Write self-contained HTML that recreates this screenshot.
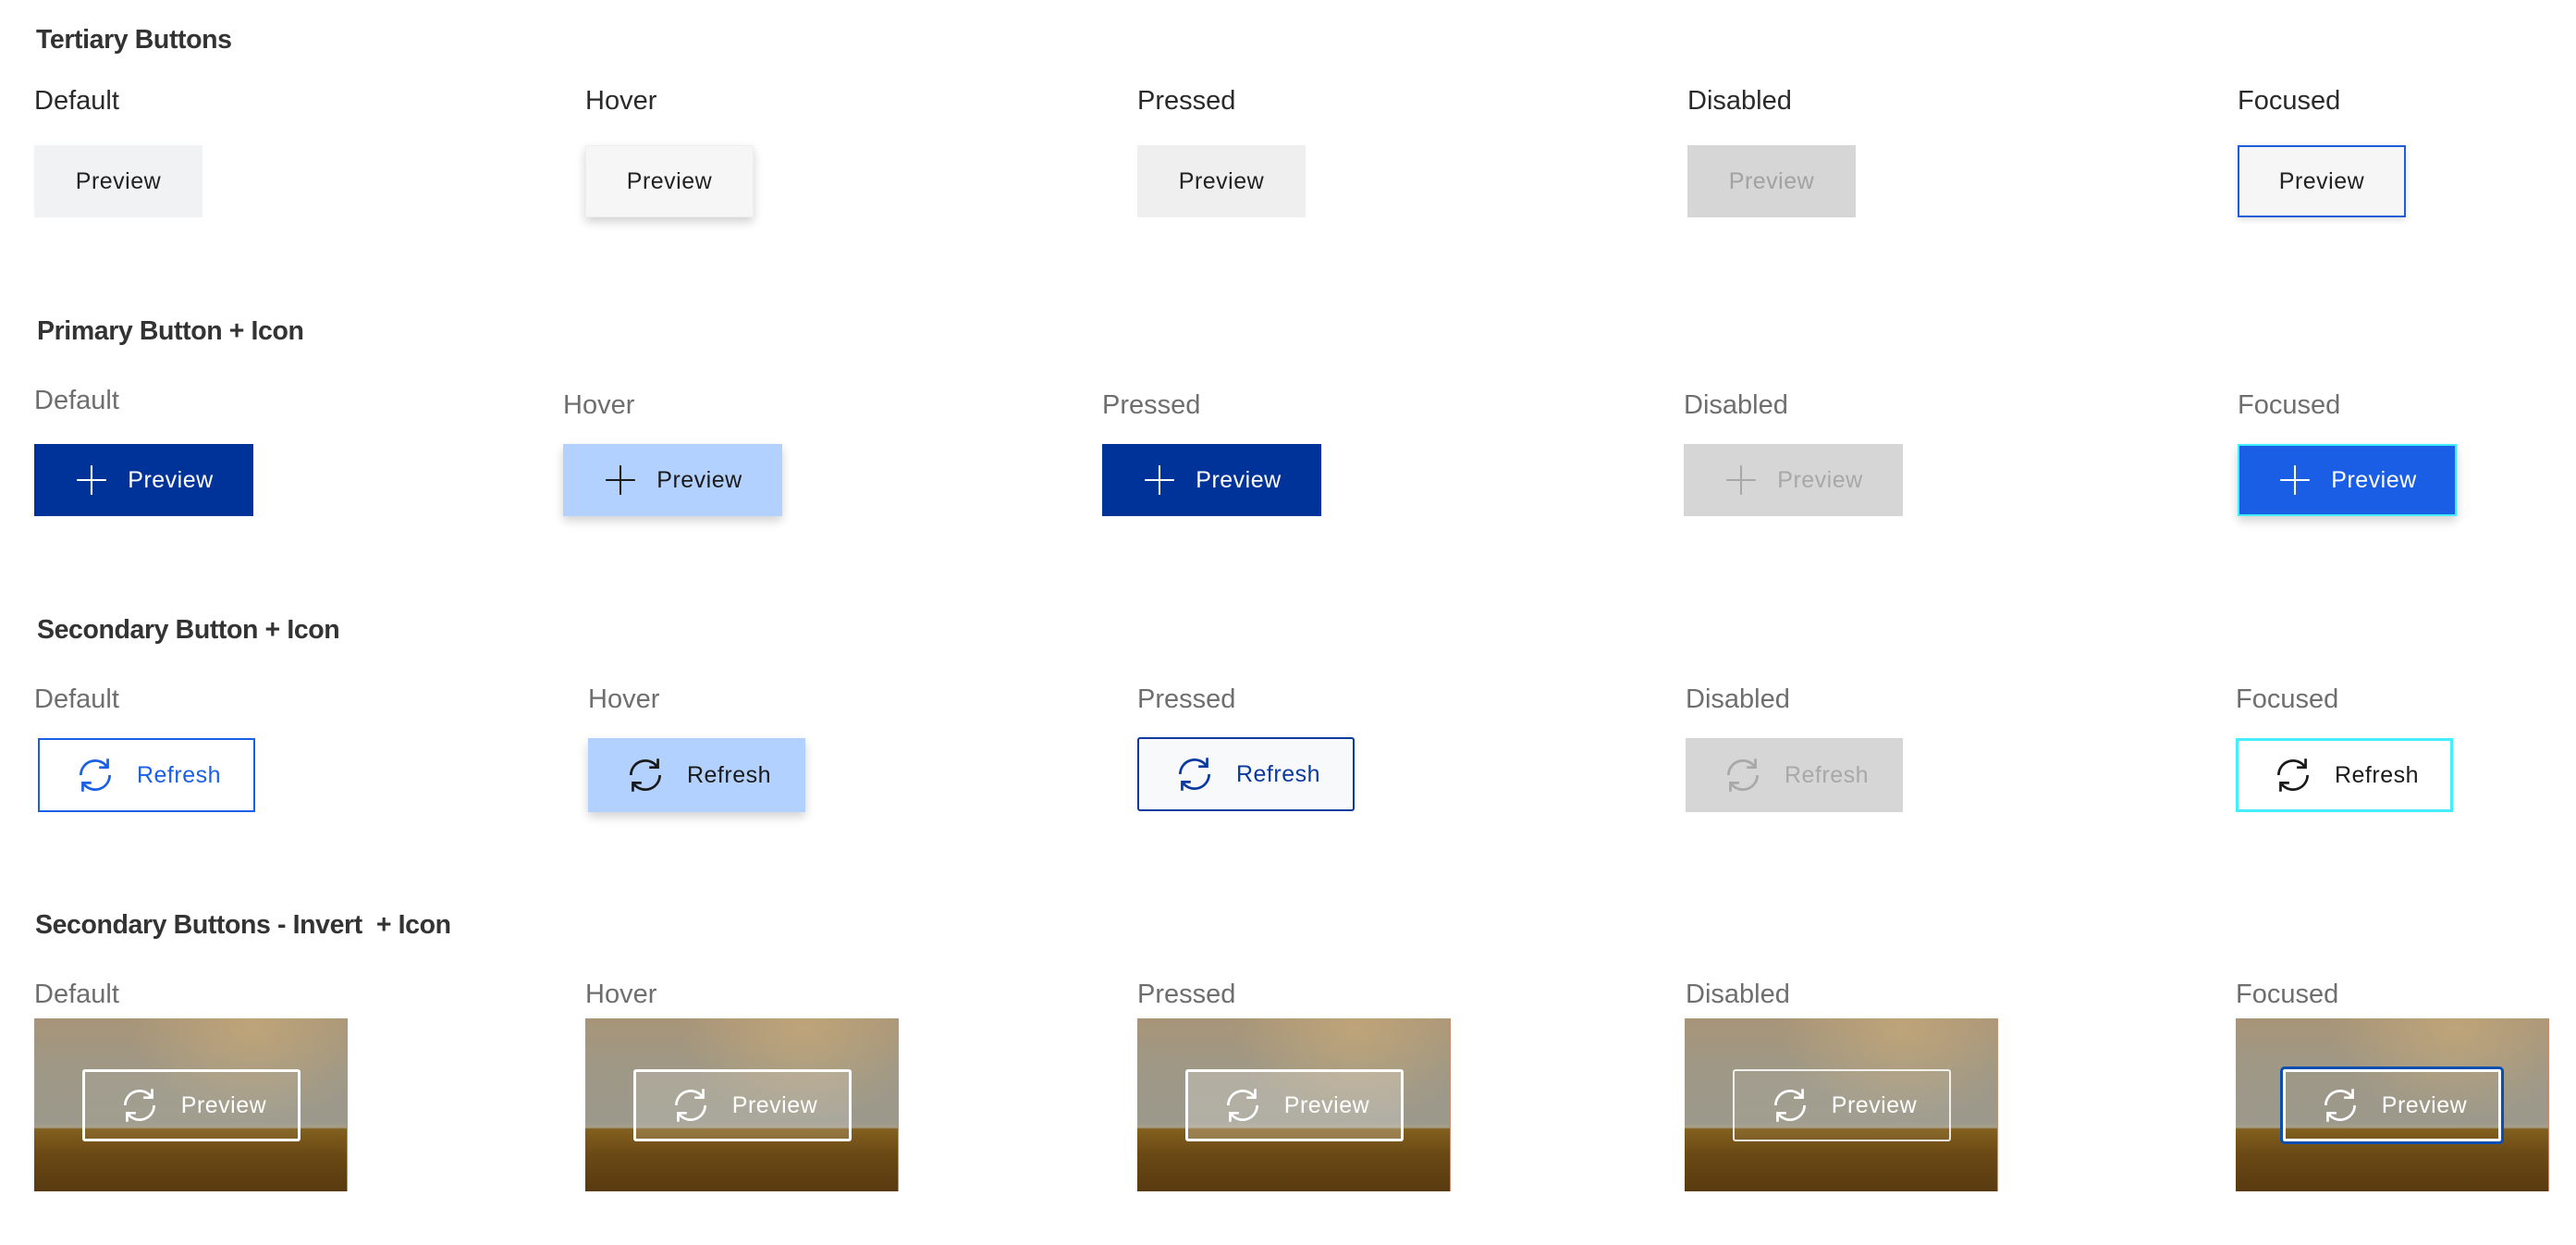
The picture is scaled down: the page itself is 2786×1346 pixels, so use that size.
<!DOCTYPE html>
<html><head><meta charset="utf-8"><style>
*{margin:0;padding:0;box-sizing:border-box}
body{width:2786px;height:1346px;background:#fff;position:relative;overflow:hidden;font-family:"Liberation Sans",Arial,sans-serif}
.h{position:absolute;font-size:28.5px;font-weight:bold;color:#333;letter-spacing:-0.4px}
.l{position:absolute;font-size:29px;color:#6e6e6e;line-height:1}
.l.d{color:#2a2a2a}
.b{position:absolute;display:flex;align-items:center;justify-content:center;font-size:25px;letter-spacing:0.5px}
.b svg{margin-right:20px}
.img{position:absolute;width:339px;height:187px;background:
linear-gradient(180deg,rgba(0,0,0,0) 0%,rgba(0,0,0,0) 63%,#82601f 64%,#6c4a15 78%,#583a10 100%),
radial-gradient(ellipse at 70% 5%,rgba(200,170,120,0.7) 0%,rgba(200,180,140,0) 40%),
linear-gradient(180deg,#a89578 0%,#9e9886 30%,#9c998c 60%,#a59e8a 63%);border-right:1px solid #c98a70}
.ib{position:absolute;left:52px;top:55px;width:236px;height:78px;border:3px solid #fff;border-radius:3px;color:#fff;display:flex;align-items:center;justify-content:center;font-size:25px;letter-spacing:0.5px;background:rgba(255,255,255,0.05)}
.ib svg{margin-right:20px}
</style></head><body>
<svg width="0" height="0" style="position:absolute"><defs>
<symbol id="r" viewBox="0 0 24 24"><path d="M4.5 12A7.5 7.5 0 0 1 18 7.5M18.5 3.5V8H14M19.5 12A7.5 7.5 0 0 1 6 16.5M5.5 20.5V16H10" fill="none" stroke="currentColor" stroke-width="1.3"/></symbol>
<symbol id="p" viewBox="0 0 24 24"><path d="M12 2V22M2 12H22" fill="none" stroke="currentColor" stroke-width="1.3"/></symbol>
</defs></svg>

<div class="h" style="left:39px;top:27px">Tertiary Buttons</div>
<div class="l d" style="left:37px;top:95px">Default</div>
<div class="l d" style="left:633px;top:95px">Hover</div>
<div class="l d" style="left:1230px;top:95px">Pressed</div>
<div class="l d" style="left:1825px;top:95px">Disabled</div>
<div class="l d" style="left:2420px;top:95px">Focused</div>
<div class="b" style="left:37px;top:157px;width:182px;height:78px;background:#f1f2f3;color:#222">Preview</div>
<div class="b" style="left:633px;top:157px;width:182px;height:78px;background:#f6f6f6;border:1px solid #eee;color:#222;box-shadow:0 5px 10px rgba(0,0,0,0.18)">Preview</div>
<div class="b" style="left:1230px;top:157px;width:182px;height:78px;background:#efefef;color:#222">Preview</div>
<div class="b" style="left:1825px;top:157px;width:182px;height:78px;background:#d6d6d6;color:#a2a2a2">Preview</div>
<div class="b" style="left:2420px;top:157px;width:182px;height:78px;background:#f6f6f6;border:2px solid #1b5fd6;color:#222;box-shadow:0 3px 6px rgba(0,0,0,0.12)">Preview</div>

<div class="h" style="left:40px;top:342px">Primary Button + Icon</div>
<div class="l" style="left:37px;top:419px">Default</div>
<div class="l" style="left:609px;top:424px">Hover</div>
<div class="l" style="left:1192px;top:424px">Pressed</div>
<div class="l" style="left:1821px;top:424px">Disabled</div>
<div class="l" style="left:2420px;top:424px">Focused</div>
<div class="b" style="left:37px;top:480px;width:237px;height:78px;background:#003399;color:#fff"><svg width="38" height="38"><use href="#p"/></svg>Preview</div>
<div class="b" style="left:609px;top:480px;width:237px;height:78px;background:#b3d1fe;color:#1a1a1a;box-shadow:0 5px 10px rgba(0,0,0,0.18)"><svg width="38" height="38"><use href="#p"/></svg>Preview</div>
<div class="b" style="left:1192px;top:480px;width:237px;height:78px;background:#003399;color:#fff"><svg width="38" height="38"><use href="#p"/></svg>Preview</div>
<div class="b" style="left:1821px;top:480px;width:237px;height:78px;background:#d6d6d6;color:#a8a8a8"><svg width="38" height="38"><use href="#p"/></svg>Preview</div>
<div class="b" style="left:2420px;top:480px;width:237px;height:78px;background:#1a5ee6;border:2px solid #40eeff;color:#fff;box-shadow:0 5px 10px rgba(0,0,0,0.18)"><svg width="38" height="38"><use href="#p"/></svg>Preview</div>

<div class="h" style="left:40px;top:665px">Secondary Button + Icon</div>
<div class="l" style="left:37px;top:742px">Default</div>
<div class="l" style="left:636px;top:742px">Hover</div>
<div class="l" style="left:1230px;top:742px">Pressed</div>
<div class="l" style="left:1823px;top:742px">Disabled</div>
<div class="l" style="left:2418px;top:742px">Focused</div>
<div class="b" style="left:41px;top:798px;width:235px;height:80px;background:#fff;border:2px solid #1a5fe8;color:#1a5fe8"><svg width="50" height="50"><use href="#r"/></svg>Refresh</div>
<div class="b" style="left:636px;top:798px;width:235px;height:80px;background:#b3d1fe;color:#1a1a1a;box-shadow:0 5px 10px rgba(0,0,0,0.18)"><svg width="50" height="50"><use href="#r"/></svg>Refresh</div>
<div class="b" style="left:1230px;top:797px;width:235px;height:80px;background:#f8f9fb;border:2px solid #0a3a9e;border-radius:3px;color:#0a3a9e"><svg width="50" height="50"><use href="#r"/></svg>Refresh</div>
<div class="b" style="left:1823px;top:798px;width:235px;height:80px;background:#d6d6d6;color:#a8a8a8"><svg width="50" height="50"><use href="#r"/></svg>Refresh</div>
<div class="b" style="left:2418px;top:798px;width:235px;height:80px;background:#fff;border:3px solid #44eeff;color:#1a1a1a"><svg width="50" height="50"><use href="#r"/></svg>Refresh</div>

<div class="h" style="left:38px;top:984px">Secondary Buttons - Invert&nbsp; + Icon</div>
<div class="l" style="left:37px;top:1061px">Default</div>
<div class="l" style="left:633px;top:1061px">Hover</div>
<div class="l" style="left:1230px;top:1061px">Pressed</div>
<div class="l" style="left:1823px;top:1061px">Disabled</div>
<div class="l" style="left:2418px;top:1061px">Focused</div>
<div class="img" style="left:37px;top:1101px"><div class="ib"><svg width="50" height="50"><use href="#r"/></svg>Preview</div></div>
<div class="img" style="left:633px;top:1101px"><div class="ib" style="background:rgba(255,255,255,0.15)"><svg width="50" height="50"><use href="#r"/></svg>Preview</div></div>
<div class="img" style="left:1230px;top:1101px"><div class="ib" style="background:rgba(255,255,255,0.22)"><svg width="50" height="50"><use href="#r"/></svg>Preview</div></div>
<div class="img" style="left:1822px;top:1101px"><div class="ib" style="border-width:2px;border-color:rgba(255,255,255,0.85)"><svg width="50" height="50"><use href="#r"/></svg>Preview</div></div>
<div class="img" style="left:2418px;top:1101px"><div class="ib" style="left:48px;top:52px;width:242px;height:84px;border:3px solid #0a4fb0;border-radius:5px;background:none;box-shadow:inset 0 0 0 3px #fff"><svg width="50" height="50"><use href="#r"/></svg>Preview</div></div>
</body></html>
